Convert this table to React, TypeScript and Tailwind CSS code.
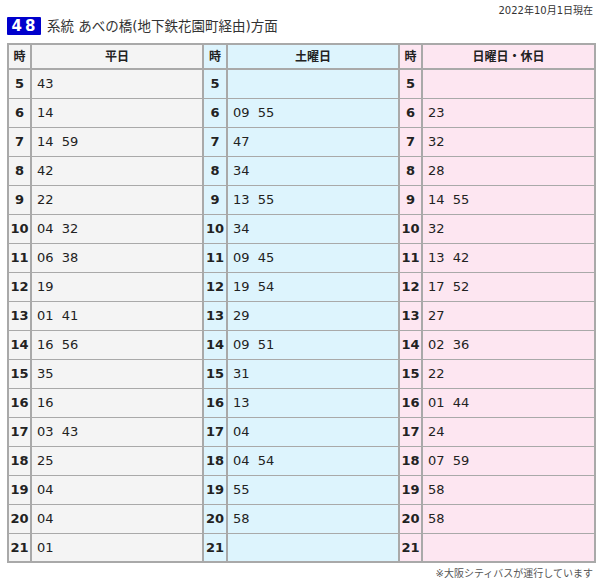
const rows: [number, string, string, string][] = [
  [5, "43", "", ""],
  [6, "14", "09  55", "23"],
  [7, "14  59", "47", "32"],
  [8, "42", "34", "28"],
  [9, "22", "13  55", "14  55"],
  [10, "04  32", "34", "32"],
  [11, "06  38", "09  45", "13  42"],
  [12, "19", "19  54", "17  52"],
  [13, "01  41", "29", "27"],
  [14, "16  56", "09  51", "02  36"],
  [15, "35", "31", "22"],
  [16, "16", "13", "01  44"],
  [17, "03  43", "04", "24"],
  [18, "25", "04  54", "07  59"],
  [19, "04", "55", "58"],
  [20, "04", "58", "58"],
  [21, "01", "", ""],
];

const font = { fontFamily: '"DejaVu Sans", "Noto Sans CJK JP", sans-serif' };

export default function App() {
  return (
    <div className="w-[600px] h-[587px] bg-white text-[#222] relative" style={font}>
      <div className="text-[10px] text-[#333] text-right pr-[7px] pt-[4px] h-[14px] leading-[14px]">
        2022年10月1日現在
      </div>
      <div className="flex items-center gap-[6px] pl-[7px] mt-[3px] h-[18px]">
        <span className="bg-[#0000cc] text-white font-bold text-[15px] w-[34px] h-[18px] flex items-center justify-center tracking-[3px] pl-[2px] rounded-[1px]">
          48
        </span>
        <span className="text-[13.5px] text-[#333]">系統 あべの橋(地下鉄花園町経由)方面</span>
      </div>
      <table className="ml-[7px] mt-[8px] border-collapse border-2 border-[#a9a9a9] table-fixed w-[587px]">
        <colgroup>
          <col className="w-[23px]" />
          <col className="w-[172px]" />
          <col className="w-[24px]" />
          <col className="w-[172px]" />
          <col className="w-[23px]" />
          <col className="w-[173px]" />
        </colgroup>
        <thead>
          <tr className="h-[25px] text-[12px] font-bold">
            <th className="bg-[#f4f4f4] border-2 border-[#a9a9a9]">時</th>
            <th className="bg-[#f4f4f4] border-2 border-[#a9a9a9]">平日</th>
            <th className="bg-[#ddf4fd] border-2 border-[#a9a9a9]">時</th>
            <th className="bg-[#ddf4fd] border-2 border-[#a9a9a9]">土曜日</th>
            <th className="bg-[#fde6f1] border-2 border-[#a9a9a9]">時</th>
            <th className="bg-[#fde6f1] border-2 border-[#a9a9a9]">日曜日・休日</th>
          </tr>
        </thead>
        <tbody>
          {rows.map(([h, a, b, c]) => (
            <tr key={h} className="h-[29px] text-[13px]">
              <td className="bg-[#f4f4f4] border-x-2 border-y border-[#a9a9a9] text-center font-bold">{h}</td>
              <td className="bg-[#f4f4f4] border-x-2 border-y border-[#a9a9a9] pl-[5px] whitespace-pre">{a}</td>
              <td className="bg-[#ddf4fd] border-x-2 border-y border-[#a9a9a9] text-center font-bold">{h}</td>
              <td className="bg-[#ddf4fd] border-x-2 border-y border-[#a9a9a9] pl-[5px] whitespace-pre">{b}</td>
              <td className="bg-[#fde6f1] border-x-2 border-y border-[#a9a9a9] text-center font-bold">{h}</td>
              <td className="bg-[#fde6f1] border-x-2 border-y border-[#a9a9a9] pl-[5px] whitespace-pre">{c}</td>
            </tr>
          ))}
        </tbody>
      </table>
      <div className="text-[10px] text-[#555] text-right pr-[7px] mt-[3px]">※大阪シティバスが運行しています</div>
    </div>
  );
}
